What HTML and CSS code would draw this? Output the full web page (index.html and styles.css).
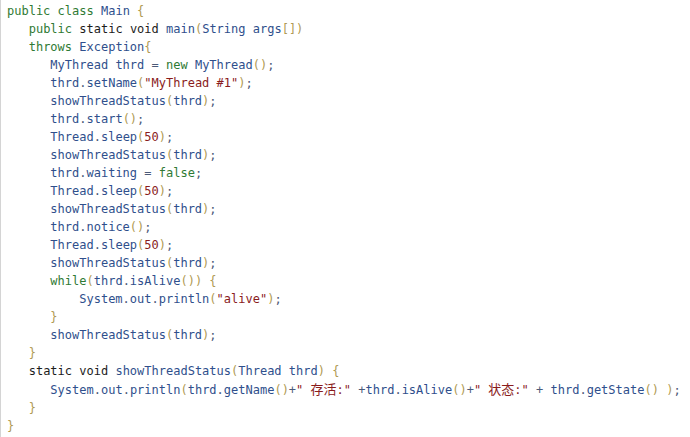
FILE: index.html
```html
<!DOCTYPE html>
<html>
<head>
<meta charset="utf-8">
<link rel="stylesheet" href="styles.css">
</head>
<body>
<div class="frame">
<pre class="code"><span class="kw">public</span> <span class="kw">class</span> <span class="id">Main</span> <span class="p">{</span>
   <span class="kw">public</span> <span class="bk">static</span> <span class="bk">void</span> <span class="id">main</span><span class="p">(</span><span class="id">String</span> <span class="id">args</span><span class="p">[])</span>
   <span class="kw">throws</span> <span class="id">Exception</span><span class="p">{</span>
      <span class="id">MyThread</span> <span class="id">thrd</span> <span class="op">=</span> <span class="kw">new</span> <span class="id">MyThread</span><span class="p">()</span><span class="op">;</span>
      <span class="id">thrd</span><span class="op">.</span><span class="id">setName</span><span class="p">(</span><span class="s">"MyThread #1"</span><span class="p">)</span><span class="op">;</span>
      <span class="id">showThreadStatus</span><span class="p">(</span><span class="id">thrd</span><span class="p">)</span><span class="op">;</span>
      <span class="id">thrd</span><span class="op">.</span><span class="id">start</span><span class="p">()</span><span class="op">;</span>
      <span class="id">Thread</span><span class="op">.</span><span class="id">sleep</span><span class="p">(</span><span class="s">50</span><span class="p">)</span><span class="op">;</span>
      <span class="id">showThreadStatus</span><span class="p">(</span><span class="id">thrd</span><span class="p">)</span><span class="op">;</span>
      <span class="id">thrd</span><span class="op">.</span><span class="id">waiting</span> <span class="op">=</span> <span class="kw">false</span><span class="op">;</span>
      <span class="id">Thread</span><span class="op">.</span><span class="id">sleep</span><span class="p">(</span><span class="s">50</span><span class="p">)</span><span class="op">;</span>
      <span class="id">showThreadStatus</span><span class="p">(</span><span class="id">thrd</span><span class="p">)</span><span class="op">;</span>
      <span class="id">thrd</span><span class="op">.</span><span class="id">notice</span><span class="p">()</span><span class="op">;</span>
      <span class="id">Thread</span><span class="op">.</span><span class="id">sleep</span><span class="p">(</span><span class="s">50</span><span class="p">)</span><span class="op">;</span>
      <span class="id">showThreadStatus</span><span class="p">(</span><span class="id">thrd</span><span class="p">)</span><span class="op">;</span>
      <span class="kw">while</span><span class="p">(</span><span class="id">thrd</span><span class="op">.</span><span class="id">isAlive</span><span class="p">())</span> <span class="p">{</span>
          <span class="id">System</span><span class="op">.</span><span class="id">out</span><span class="op">.</span><span class="id">println</span><span class="p">(</span><span class="s">"alive"</span><span class="p">)</span><span class="op">;</span>
      <span class="p">}</span>
      <span class="id">showThreadStatus</span><span class="p">(</span><span class="id">thrd</span><span class="p">)</span><span class="op">;</span>
   <span class="p">}</span>
   <span class="bk">static</span> <span class="bk">void</span> <span class="id">showThreadStatus</span><span class="p">(</span><span class="id">Thread</span> <span class="id">thrd</span><span class="p">)</span> <span class="p">{</span>
      <span class="id">System</span><span class="op">.</span><span class="id">out</span><span class="op">.</span><span class="id">println</span><span class="p">(</span><span class="id">thrd</span><span class="op">.</span><span class="id">getName</span><span class="p">()</span><span class="op">+</span><span class="s">" <span class="cjk">存活</span>:"</span> <span class="op">+</span><span class="id">thrd</span><span class="op">.</span><span class="id">isAlive</span><span class="p">()</span><span class="op">+</span><span class="s">" <span class="cjk">状态</span>:"</span> <span class="op">+</span> <span class="id">thrd</span><span class="op">.</span><span class="id">getState</span><span class="p">()</span> <span class="p">)</span><span class="op">;</span>
   <span class="p">}</span>
<span class="p">}</span></pre>
</div>
</body>
</html>
```

FILE: styles.css
```css
html, body {
  margin: 0;
  padding: 0;
  background: #ffffff;
}

.frame {
  height: 437px;
  border-left: 1px solid #d4d4d4;
  box-sizing: border-box;
}

.code {
  margin: 0;
  padding: 2px 0 0 6px;
  font-family: "DejaVu Sans Mono", "Liberation Mono", monospace;
  font-size: 12px;
  line-height: 18px;
  color: #2f4f8f;
  white-space: pre;
}

.kw { color: #2f7a34; }
.bk { color: #1c1c1c; }
.id { color: #2f4f8c; }
.p  { color: #b09a52; }
.op { color: #4c5a78; }
.s  { color: #8a1c1c; }

.cjk {
  font-family: "Noto Sans CJK SC", sans-serif;
  font-size: 13px;
  line-height: 18px;
}
```
